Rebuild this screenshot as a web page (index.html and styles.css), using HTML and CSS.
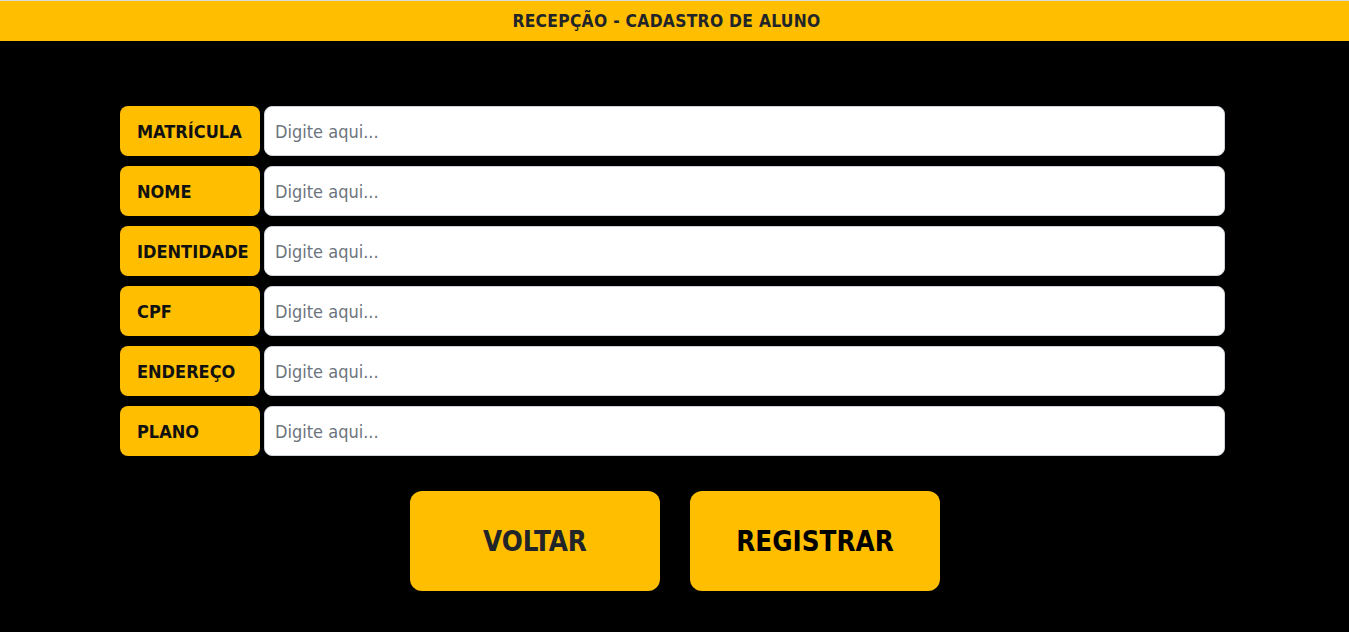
FILE: index.html
```html
<!DOCTYPE html>
<html lang="pt-BR">
<head>
<meta charset="utf-8">
<title>Recepção - Cadastro de Aluno</title>
<link rel="stylesheet" href="styles.css">
</head>
<body>
<header class="topbar">RECEPÇÃO - CADASTRO DE ALUNO</header>
<main class="content">
  <form class="form">
    <div class="row"><label class="label">MATRÍCULA</label><input class="field" type="text" placeholder="Digite aqui..."></div>
    <div class="row"><label class="label">NOME</label><input class="field" type="text" placeholder="Digite aqui..."></div>
    <div class="row"><label class="label">IDENTIDADE</label><input class="field" type="text" placeholder="Digite aqui..."></div>
    <div class="row"><label class="label">CPF</label><input class="field" type="text" placeholder="Digite aqui..."></div>
    <div class="row"><label class="label">ENDEREÇO</label><input class="field" type="text" placeholder="Digite aqui..."></div>
    <div class="row"><label class="label">PLANO</label><input class="field" type="text" placeholder="Digite aqui..."></div>
  </form>
  <div class="actions">
    <button class="btn btn-back" type="button">VOLTAR</button>
    <button class="btn btn-save" type="button">REGISTRAR</button>
  </div>
</main>
</body>
</html>
```
FILE: styles.css
```css
* { box-sizing: border-box; }
html, body {
  margin: 0;
  padding: 0;
  background: #000;
  font-family: "DejaVu Sans Condensed", "DejaVu Sans", sans-serif;
}
body {
  border-top: 1px solid #dcdcdc;
  height: 632px;
  overflow: hidden;
}
.topbar {
  background: #ffbe00;
  height: 40px;
  display: flex;
  align-items: center;
  justify-content: center;
  color: #212529;
  font-weight: bold;
  font-size: 17.3px;
  letter-spacing: 0.3px;
  padding-right: 16px;
}
.content {
  padding: 65px 124px 0 120px;
}
.form {
  display: flex;
  flex-direction: column;
  gap: 10px;
}
.row {
  display: flex;
  gap: 4px;
  height: 50px;
}
.label {
  width: 140px;
  flex: none;
  background: #ffbe00;
  border-radius: 8px;
  display: flex;
  align-items: center;
  padding-left: 17px;
  color: #111;
  font-weight: bold;
  font-size: 18px;
}
.field {
  flex: 1;
  border: 1px solid #ced4da;
  border-radius: 8px;
  background: #fff;
  padding: 0 10px;
  font-family: inherit;
  font-size: 18px;
  color: #495057;
  outline: none;
}
.field::placeholder { color: #6c757d; }
.actions {
  display: flex;
  justify-content: center;
  gap: 30px;
  margin-top: 35px;
  padding-left: 5px;
}
.btn {
  width: 250px;
  height: 100px;
  border: none;
  border-radius: 12px;
  background: #ffbe00;
  font-family: inherit;
  font-weight: bold;
  font-size: 27.5px;
  cursor: pointer;
}
.btn-back { color: #212529; }
.btn-save { color: #000; }
```
